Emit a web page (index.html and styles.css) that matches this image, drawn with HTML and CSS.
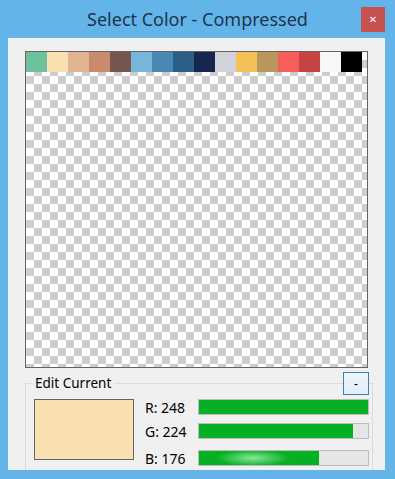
FILE: index.html
```html
<!DOCTYPE html>
<html lang="en">
<head>
    <meta charset="UTF-8">
    <meta name="viewport" content="width=device-width, initial-scale=1.0">
    <title>Select Color - Compressed</title>
    <link rel="stylesheet" href="styles.css">
</head>
<body>
    <div class="window">
        <!-- Title bar -->
        <div class="titlebar">
            <span class="title">Select Color - Compressed</span>
            <button class="close">&#x2715;</button>
        </div>

        <div class="client">
            <!-- Color canvas with palette strip -->
            <div class="canvas">
                <div class="palette">
                    <span class="swatch" style="background:#6ec19d"></span>
                    <span class="swatch" style="background:#f8e0b0"></span>
                    <span class="swatch" style="background:#e0b492"></span>
                    <span class="swatch" style="background:#c98b6b"></span>
                    <span class="swatch" style="background:#785650"></span>
                    <span class="swatch" style="background:#78b6dc"></span>
                    <span class="swatch" style="background:#4a87b5"></span>
                    <span class="swatch" style="background:#2d5e85"></span>
                    <span class="swatch" style="background:#17264e"></span>
                    <span class="swatch" style="background:#d0d3da"></span>
                    <span class="swatch" style="background:#f6c058"></span>
                    <span class="swatch" style="background:#b9975c"></span>
                    <span class="swatch" style="background:#f65e58"></span>
                    <span class="swatch" style="background:#c64343"></span>
                    <span class="swatch" style="background:#f7f7f7"></span>
                    <span class="swatch" style="background:#000000"></span>
                </div>
            </div>

            <!-- Edit Current group -->
            <div class="group">
                <span class="group-label">Edit Current</span>
                <button class="collapse">-</button>
                <div class="group-body">
                    <div class="preview"></div>
                    <div class="channels">
                        <div class="channel">
                            <span class="channel-label">R: 248</span>
                            <div class="bar"><div class="fill" style="width:100%"></div></div>
                        </div>
                        <div class="channel">
                            <span class="channel-label">G: 224</span>
                            <div class="bar"><div class="fill" style="width:91%"></div></div>
                        </div>
                        <div class="channel channel-b">
                            <span class="channel-label">B: 176</span>
                            <div class="bar"><div class="fill glow" style="width:71%"></div></div>
                        </div>
                    </div>
                </div>
            </div>
        </div>
    </div>
</body>
</html>
```

FILE: styles.css
```css
body {
    margin: 0;
    padding: 0;
    background-color: #63b4e8;
    font-family: 'Noto Sans', 'Open Sans', sans-serif;
}
.window {
    width: 395px;
    height: 479px;
    overflow: hidden;
}
.titlebar {
    height: 38px;
    display: grid;
    grid-template-columns: 1fr auto 1fr;
    align-items: start;
}
.title {
    grid-column: 2;
    margin-top: 7px;
    font-size: 18px;
    color: #1c3550;
    white-space: nowrap;
}
.close {
    grid-column: 3;
    justify-self: end;
    margin-top: 7px;
    margin-right: 10px;
    width: 24px;
    height: 25px;
    border: none;
    padding: 0;
    background-color: #c75050;
    color: white;
    font-size: 10px;
    font-weight: bold;
    font-family: 'DejaVu Sans', sans-serif;
}
.client {
    margin: 0 10px 0 8px;
    height: 432px;
    background-color: #f0f0f0;
    padding: 13px 0 0 17px;
    box-sizing: border-box;
    overflow: hidden;
}
.canvas {
    width: 343px;
    height: 317px;
    box-sizing: border-box;
    border: 1px solid #646464;
    background-color: #fff;
    background-image: conic-gradient(#cdcdcd 0 25%, #fff 0 50%, #cdcdcd 0 75%, #fff 0);
    background-size: 16px 16px;
}
.palette {
    display: flex;
    height: 20px;
}
.swatch {
    width: 21px;
    height: 20px;
}
.group {
    position: relative;
    margin-top: 15px;
    width: 348px;
    height: 120px;
    box-sizing: border-box;
    border: 1px solid #dcdcdc;
}
.group-label {
    position: absolute;
    left: 6px;
    top: -10px;
    padding: 0 3px;
    background-color: #f0f0f0;
    font-size: 13.5px;
    line-height: 18px;
    color: #000;
}
.collapse {
    position: absolute;
    right: 3px;
    top: -12px;
    width: 26px;
    height: 23px;
    padding: 0;
    border: 1px solid #3c7fb1;
    background: linear-gradient(#eef5fc, #e0eefb);
    font-size: 12px;
    line-height: 18px;
    color: #000;
}
.group-body {
    display: flex;
    padding: 15px 0 0 8px;
}
.preview {
    width: 100px;
    height: 61px;
    box-sizing: border-box;
    border: 1px solid #646464;
    background-color: #f8e0b0;
    margin-right: 11px;
}
.channels {
    display: flex;
    flex-direction: column;
    gap: 8px;
}
.channel {
    display: flex;
    align-items: center;
    height: 16px;
}
.channel-b {
    margin-top: 3px;
}
.channel-label {
    width: 53px;
    font-size: 14px;
    color: #000;
    white-space: nowrap;
}
.bar {
    width: 171px;
    height: 16px;
    box-sizing: border-box;
    border: 1px solid #bcbcbc;
    background-color: #e6e6e6;
}
.fill {
    height: 100%;
    background-color: #06b025;
}
.fill.glow {
    background: radial-gradient(ellipse 30% 60% at 45% 50%, #8ae79a, rgba(6, 176, 37, 0)), #06b025;
}
```
